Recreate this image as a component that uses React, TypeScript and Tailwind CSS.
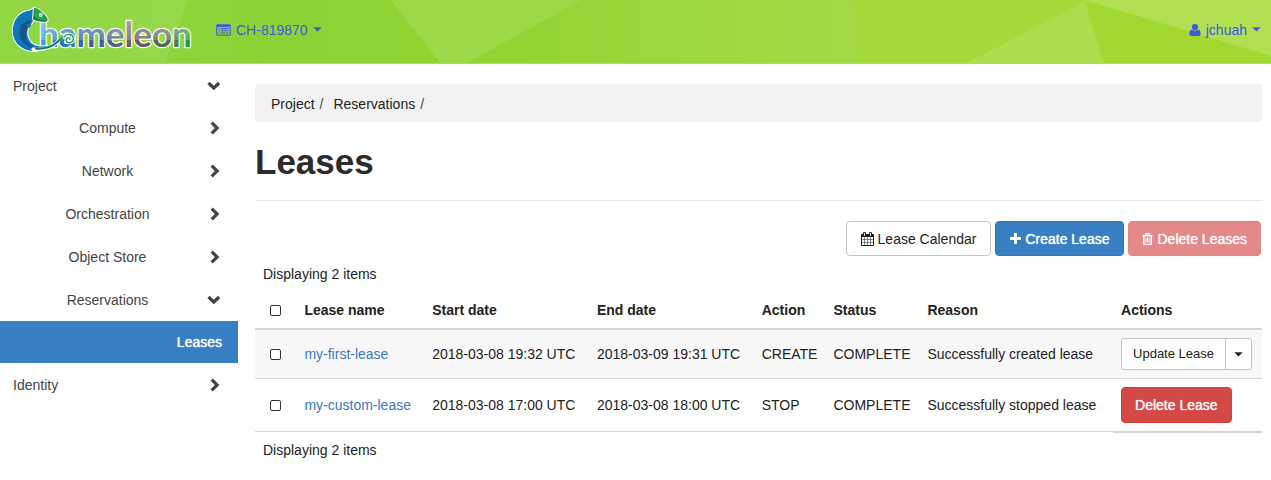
import type { ReactNode } from "react";

function Chevron({ open }: { open: boolean }) {
  return (
    <svg className="h-3.5 w-3.5 shrink-0" viewBox="0 0 14 14" fill="none" stroke="currentColor" strokeWidth="3.2" aria-hidden="true">
      {open ? <path d="M1.500 4 6.800 9l5.300-5" /> : <path d="M4.700 1.700 10.100 7l-5.400 5.300" />}
    </svg>
  );
}

function Caret() {
  return (
    <svg className="h-[5px] w-[9px] shrink-0" viewBox="0 0 9 5" fill="currentColor" aria-hidden="true">
      <path d="M.3.2h8.400L4.500 4.600z" />
    </svg>
  );
}

function ListIcon() {
  return (
    <svg className="h-3 w-[15px] shrink-0" viewBox="0 0 15.500 12" fill="currentColor" aria-hidden="true">
      <path fillRule="evenodd" d="M1.600 0h12.300C14.800 0 15.300.700 15.300 1.500v9c0 .9-.6 1.500-1.400 1.500H1.600C.700 12 .2 11.400.2 10.500v-9C.2.600.8 0 1.600 0zM1.300 3v7.500c0 .3.200.5.500.5h11.900c.3 0 .5-.2.5-.5V3z" />
      <path d="M2.500 4h1.300v1.100H2.500zM4.800 4h8.200v1.100H4.800zM2.500 6.300h1.300v1.100H2.500zM4.800 6.300h8.200v1.100H4.800zM2.500 8.600h1.300v1.100H2.500zM4.800 8.600h8.200v1.100H4.800z" />
    </svg>
  );
}

function UserIcon() {
  return (
    <svg className="h-3 w-3 shrink-0" viewBox="0 0 12 12" fill="currentColor" aria-hidden="true">
      <circle cx="6" cy="3.100" r="3.100" />
      <path d="M3 5.600c.8.800 1.800 1.200 3 1.200s2.200-.4 3-1.200c2 .1 2.600 2.200 2.600 4.200 0 1.300-.8 2.200-2 2.200H2.400c-1.200 0-2-.9-2-2.200 0-2 .6-4.100 2.600-4.200z" />
    </svg>
  );
}

function CalendarIcon() {
  return (
    <svg className="h-3.5 w-[13px] shrink-0" viewBox="0 0 1664 1792" fill="currentColor" aria-hidden="true">
      <path d="M128 1664h288v-288h-288v288zm352 0h320v-288h-320v288zm-352-352h288v-320h-288v320zm352 0h320v-320h-320v320zm-352-384h288v-288h-288v288zm736 736h320v-288h-320v288zm-384-736h320v-288h-320v288zm768 736h288v-288h-288v288zm-384-352h320v-320h-320v320zm-352-864v-288q0-13-9.500-22.500t-22.500-9.500h-64q-13 0-22.500 9.500t-9.500 22.500v288q0 13 9.500 22.500t22.500 9.500h64q13 0 22.500-9.500t9.500-22.500zm736 864h288v-320h-288v320zm-384-384h320v-288h-320v288zm384 0h288v-288h-288v288zm32-480v-288q0-13-9.500-22.500t-22.500-9.500h-64q-13 0-22.500 9.500t-9.500 22.500v288q0 13 9.500 22.500t22.500 9.500h64q13 0 22.500-9.500t9.500-22.500zm384-64v1280q0 52-38 90t-90 38h-1408q-52 0-90-38t-38-90v-1280q0-52 38-90t90-38h128v-96q0-66 47-113t113-47h64q66 0 113 47t47 113v96h384v-96q0-66 47-113t113-47h64q66 0 113 47t47 113v96h128q52 0 90 38t38 90z" />
    </svg>
  );
}

function PlusIcon() {
  return (
    <svg className="h-[11px] w-[11px] shrink-0" viewBox="0 0 11 11" fill="currentColor" aria-hidden="true">
      <path d="M4.700 0h1.600q.7 0 .7.700V4h3.300q.7 0 .7.700v1.600q0 .7-.7.700H7v3.300q0 .7-.7.700H4.700q-.7 0-.7-.7V7H.7Q0 7 0 6.300V4.700Q0 4 .7 4H4V.7Q4 0 4.700 0z" />
    </svg>
  );
}

function TrashIcon() {
  return (
    <svg className="h-3 w-[11px] shrink-0" viewBox="0 0 11 12" fill="none" stroke="currentColor" aria-hidden="true">
      <path d="M.3 2.700h10.400" strokeWidth="1.500" />
      <path d="M3.500 2.300 4 .8h3l.5 1.500" strokeWidth="1.400" />
      <path d="M1.800 2.800v7.700c0 .6.400.9.900.9h5.600c.5 0 .9-.3.900-.9V2.800" strokeWidth="1.500" />
      <path d="M3.900 4.600v5M5.500 4.600v5M7.100 4.600v5" strokeWidth="1" />
    </svg>
  );
}

function Logo() {
  return (
    <svg className="h-14 w-[190px] shrink-0" viewBox="6 2 190 56" role="img" aria-label="Chameleon">
      <defs>
        <linearGradient id="word" gradientUnits="userSpaceOnUse" x1="40" y1="0" x2="192" y2="0">
          <stop offset="0" stopColor="#35a4dc" />
          <stop offset=".18" stopColor="#2670b2" />
          <stop offset=".4" stopColor="#455f9a" />
          <stop offset=".58" stopColor="#666072" />
          <stop offset=".7" stopColor="#675a54" />
          <stop offset=".87" stopColor="#52744c" />
          <stop offset="1" stopColor="#2b9c3c" />
        </linearGradient>
        <linearGradient id="shine" gradientUnits="userSpaceOnUse" x1="0" y1="22" x2="0" y2="47">
          <stop offset="0" stopColor="#fff" stopOpacity=".4" />
          <stop offset=".72" stopColor="#fff" stopOpacity=".2" />
          <stop offset=".73" stopColor="#fff" stopOpacity="0" />
        </linearGradient>
      </defs>
      <text x="39" y="47" fontSize="35" fontWeight="700" fontFamily="Lato, sans-serif" fill="url(#word)" stroke="#fff" strokeWidth="2.400" strokeLinejoin="round" paintOrder="stroke">
        hameleon
      </text>
      <text x="39" y="47" fontSize="35" fontWeight="700" fontFamily="Lato, sans-serif" fill="url(#shine)" aria-hidden="true">
        hameleon
      </text>
      <path
        d="M34 8.200C36.500 8.600 39 10 41 12l-7.500 5.500C33 19 33.500 21 32 22.500c-3.500 3.500-5.500 8-4.500 13C28.500 41 32 45.500 40 46.500c3 .2 5-.2 7-1-2.500 3.500-8 5.500-14 5.500C21 50.500 12.800 42 12.800 31 12.800 19 20 11.500 30 10.500z"
        fill="#0f76b8"
        stroke="#fff"
        strokeWidth="2"
        strokeLinejoin="round"
        paintOrder="stroke"
      />
      <path d="M30 20.500C23 21.500 19 26 19.500 33c.4 6 4 11.500 12.500 15.500-1-3-4.500-6-5.500-11-1-5.500 1-10.500 5-14z" fill="#17558d" />
      <path d="M26.500 24.500l4.500-1.500-.8 2 1.800.5-2 .8.500 1.500-3-.3M26 38l3 1-.2 1.500 2 .4-1.500 1.200-3-1" fill="#0f76b8" />
      <path d="M33 49.300c10 .8 19-1.300 25-7.800" fill="none" stroke="#fff" strokeWidth="3.400" strokeLinecap="round" />
      <path d="M36 48.700c9 .3 16-1.700 22-7.200" fill="none" stroke="#127a6a" strokeWidth="2" strokeLinecap="round" />
      <path d="M58 41.500c2.500-2.300 4.500-5.500 8-6.800" fill="none" stroke="#159455" strokeWidth="2" strokeLinecap="round" />
      <path d="M64 37c3-4 9-3.200 9.300 1.500.2 5-6.300 5.700-7.100 1.900-.4-2.800 3.500-3.600 3.900-1.100" fill="none" stroke="#fff" strokeWidth="3.200" strokeLinecap="round" />
      <path d="M64 37c3-4 9-3.200 9.300 1.500.2 5-6.300 5.700-7.100 1.900-.4-2.800 3.500-3.600 3.900-1.100" fill="none" stroke="#17905c" strokeWidth="1.300" strokeLinecap="round" />
      <path
        d="M34.200 7.800c3.600.4 6 2.400 8.300 4.600 1.800 1.800 4.300 4 5.200 6.700.3 1.600-.4 2.700-2 2.800-4.500.2-8.700-.7-12.500-2.400-.5-2 .2-4 .2-6.500 0-2 .1-3.600.8-5.200z"
        fill="#25a343"
        stroke="#fff"
        strokeWidth="1.800"
        strokeLinejoin="round"
        paintOrder="stroke"
      />
      <path d="M34 16c1.500 2.600 5 4 12.500 5-4.500.8-9.300 0-13.300-1.700-.1-1.300.3-2.200.8-3.300z" fill="#167c45" />
      <circle cx="40.700" cy="15" r="1.900" fill="#fff" />
      <circle cx="41" cy="15.100" r=".7" fill="#3b716a" />
    </svg>
  );
}

function HeaderArt() {
  return (
    <svg className="absolute inset-0 h-full w-full" viewBox="0 0 1271 63" preserveAspectRatio="none" aria-hidden="true">
      <defs>
        <linearGradient id="base" x1="0" x2="1" y1="0" y2="0">
          <stop offset="0" stopColor="#93d748" />
          <stop offset=".2" stopColor="#8cd235" />
          <stop offset=".4" stopColor="#91d433" />
          <stop offset=".5" stopColor="#9bd83b" />
          <stop offset=".67" stopColor="#a4da45" />
          <stop offset="1" stopColor="#a2d92f" />
        </linearGradient>
        <linearGradient id="left" x1="0" x2="1" y1="0" y2="0">
          <stop offset="0" stopColor="#91d643" />
          <stop offset="1" stopColor="#96d94b" />
        </linearGradient>
      </defs>
      <path d="M0 0h1271v63H0z" fill="url(#base)" />
      <path d="M0 0h188L165 63H0z" fill="url(#left)" />
      <path d="M391 0h190L467 63h-27z" fill="#9cda4a" />
      <path d="M850 0h235L967 63H858z" fill="#a4da3b" />
      <path d="M1085 1 1104 63H967z" fill="#acdd4e" />
      <path d="M1085 1 1271 56v7h-167z" fill="#a1d932" />
      <path d="M1085 0h186v56z" fill="#b1df51" />
    </svg>
  );
}

type NavProps = { label: string; open?: boolean; nested?: boolean };

function NavItem({ label, open = false, nested = false }: NavProps) {
  return (
    <li>
      <button
        type="button"
        aria-expanded={open}
        className={nested ? "flex h-[43px] w-full items-center pr-[17px] text-[#444]" : "flex h-[42px] w-full items-center pr-[17px] pt-px text-[#444]"}
      >
        <span className={nested ? "flex-1 pl-2 text-center" : "flex-1 pl-[13px] text-left"}>{label}</span>
        <Chevron open={open} />
      </button>
    </li>
  );
}

function CheckBox({ label }: { label: string }) {
  return (
    <input
      type="checkbox"
      aria-label={label}
      className="mx-auto block h-[11px] w-[11px] appearance-none rounded-[2px] border border-[#333] bg-white checked:bg-[#337ab7]"
    />
  );
}

const leases = [
  { name: "my-first-lease", start: "2018-03-08 19:32 UTC", end: "2018-03-09 19:31 UTC", action: "CREATE", status: "COMPLETE", reason: "Successfully created lease" },
  { name: "my-custom-lease", start: "2018-03-08 17:00 UTC", end: "2018-03-08 18:00 UTC", action: "STOP", status: "COMPLETE", reason: "Successfully stopped lease" },
];

function Cell({ children, divided }: { children: ReactNode; divided: boolean }) {
  return <td className={divided ? "border-t border-[#d6d6d6] p-2" : "p-2"}>{children}</td>;
}

export default function App() {
  return (
    <div className="min-h-screen bg-white font-['Liberation_Sans',Arial,sans-serif] text-sm leading-5 text-[#222]">
      <header className="relative h-16 border-b border-[#bcc6ae]">
        <HeaderArt />
        <div className="relative flex h-full items-center justify-between pb-1 pl-1.5 pr-2.5 text-[#3d5be0]">
          <div className="flex items-center gap-5">
            <a href="#home" className="shrink-0">
              <Logo />
            </a>
            <button type="button" className="flex items-center gap-[5px]">
              <ListIcon />
              <span>CH-819870</span>
              <Caret />
            </button>
          </div>
          <button type="button" className="flex items-center gap-[5px]">
            <UserIcon />
            <span>jchuah</span>
            <Caret />
          </button>
        </div>
      </header>

      <div className="flex">
        <nav className="w-[238px] shrink-0" aria-label="Dashboard">
          <ul>
            <NavItem label="Project" open />
            <NavItem label="Compute" nested />
            <NavItem label="Network" nested />
            <NavItem label="Orchestration" nested />
            <NavItem label="Object Store" nested />
            <NavItem label="Reservations" nested open />
            <li>
              <a href="#leases" aria-current="page" className="flex h-[42px] items-center justify-end bg-[#3880c3] pr-4 text-white text-shadow-[0_0_1px_#fff]">
                Leases
              </a>
            </li>
            <NavItem label="Identity" />
          </ul>
        </nav>

        <main className="min-w-0 flex-1 pb-5 pl-[17px] pr-[9px] pt-5">
          <nav aria-label="Breadcrumb" className="flex gap-2.5 rounded bg-[#f2f2f2] px-4 pb-2 pt-2.5">
            <span className="flex gap-[5px]">
              <a href="#project">Project</a>
              <span className="text-[#444]">/</span>
            </span>
            <span className="flex gap-[5px]">
              <a href="#reservations">Reservations</a>
              <span className="text-[#444]">/</span>
            </span>
          </nav>

          <h1 className="mt-5 border-b border-[#e8e8e8] pb-[18px] text-[35px] font-bold leading-10 text-[#2b2b2b]">Leases</h1>

          <div className="mt-5 flex justify-end gap-1 pr-px">
            <button type="button" className="flex h-[35px] items-center gap-1 rounded border border-[#c4c4c4] bg-white px-3.5">
              <CalendarIcon />
              Lease Calendar
            </button>
            <button type="button" className="flex h-[35px] items-center gap-1 rounded border border-[#3276b5] bg-[#3880c3] px-3.5 text-white text-shadow-[0_0_1px_#fff]">
              <PlusIcon />
              Create Lease
            </button>
            <button type="button" disabled className="flex h-[35px] items-center gap-1 rounded border border-[#e28482] bg-[#e38987] px-[13px] text-white text-shadow-[0_0_1px_#fff]">
              <TrashIcon />
              Delete Leases
            </button>
          </div>

          <table className="w-full border-separate border-spacing-0 whitespace-nowrap text-left">
            <caption className="p-2 text-left">Displaying 2 items</caption>
            <colgroup>
              <col className="w-[42px]" />
              <col className="w-[128px]" />
              <col className="w-[165px]" />
              <col className="w-[165px]" />
              <col className="w-[70px]" />
              <col className="w-[94px]" />
              <col className="w-[194px]" />
              <col className="w-[149px]" />
            </colgroup>
            <thead>
              <tr>
                <th className="border-b-2 border-[#d6d6d6] p-2">
                  <CheckBox label="Select all leases" />
                </th>
                {["Lease name", "Start date", "End date", "Action", "Status", "Reason", "Actions"].map((title) => (
                  <th key={title} scope="col" className="border-b-2 border-[#d6d6d6] p-2 font-bold">
                    {title}
                  </th>
                ))}
              </tr>
            </thead>
            <tbody>
              {leases.map((lease, i) => (
                <tr key={lease.name} className={i === 0 ? "bg-[#f8f8f8]" : "bg-white"}>
                  <Cell divided={i > 0}>
                    <CheckBox label={`Select ${lease.name}`} />
                  </Cell>
                  <Cell divided={i > 0}>
                    <a href={`#${lease.name}`} className="text-[#3b78c0]">
                      {lease.name}
                    </a>
                  </Cell>
                  <Cell divided={i > 0}>{lease.start}</Cell>
                  <Cell divided={i > 0}>{lease.end}</Cell>
                  <Cell divided={i > 0}>{lease.action}</Cell>
                  <Cell divided={i > 0}>{lease.status}</Cell>
                  <Cell divided={i > 0}>{lease.reason}</Cell>
                  <Cell divided={i > 0}>
                    {i === 0 ? (
                      <div className="flex h-8 w-fit rounded-[3px] border border-[#c4c4c4] bg-white">
                        <button type="button" className="px-[11px] text-[13px]">
                          Update Lease
                        </button>
                        <button type="button" aria-label="More actions" className="flex w-[26px] items-center justify-center border-l border-[#c4c4c4]">
                          <Caret />
                        </button>
                      </div>
                    ) : (
                      <button type="button" className="block h-9 rounded border border-[#d04340] bg-[#d44846] px-[13px] text-white text-shadow-[0_0_1px_#fff]">
                        Delete Lease
                      </button>
                    )}
                  </Cell>
                </tr>
              ))}
            </tbody>
            <tfoot>
              <tr>
                <td colSpan={7} className="border-t border-[#d6d6d6] p-2">
                  Displaying 2 items
                </td>
                <td className="border-t-2 border-[#d6d6d6]" />
              </tr>
            </tfoot>
          </table>
        </main>
      </div>
    </div>
  );
}
